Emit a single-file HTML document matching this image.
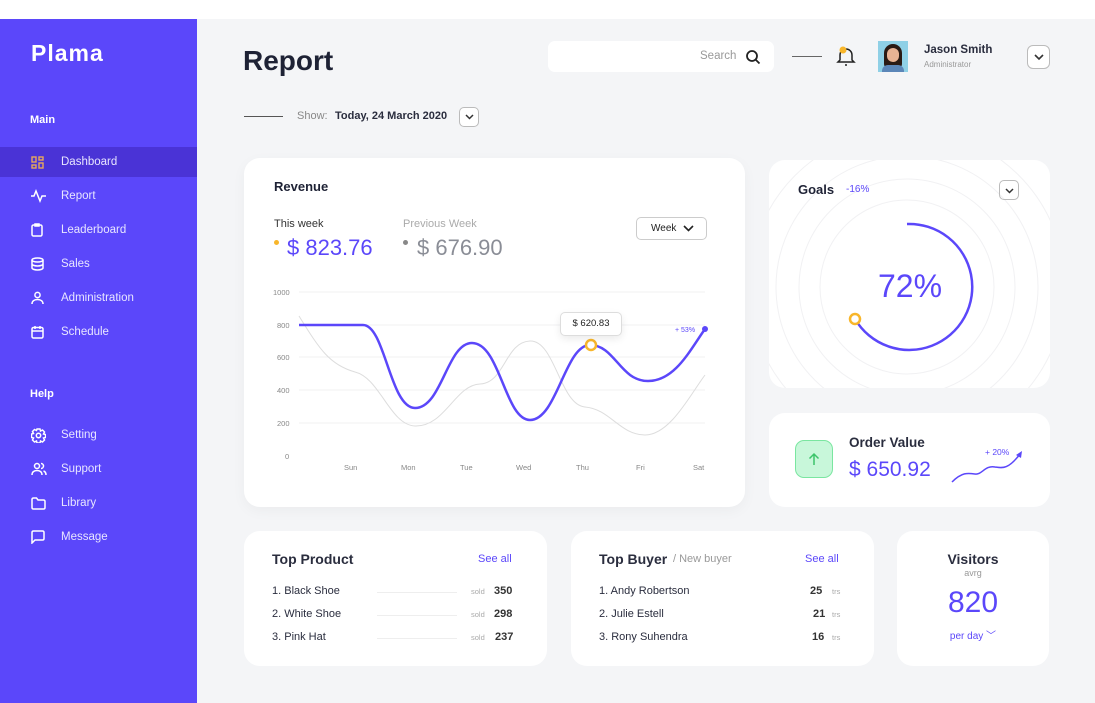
<!DOCTYPE html>
<html><head><meta charset="utf-8"><style>
*{margin:0;padding:0;box-sizing:border-box}
body{width:1095px;height:703px;background:#fff;font-family:"Liberation Sans",sans-serif;position:relative;overflow:hidden;color:#1e2235}
.main{position:absolute;left:0;top:19px;width:1095px;height:684px;background:#f4f5f7}
.side{position:absolute;left:0;top:19px;width:197px;height:684px;background:#5b47fa;color:#fff}
.a{position:absolute}
.card{position:absolute;background:#fff;border-radius:16px}
.nav{position:absolute;left:0;width:197px;height:30px;display:flex;align-items:center;font-size:11.5px;color:#e8e6ff}
.nav svg{position:absolute;left:31px}
.nav span{position:absolute;left:61px}
.sm{font-size:11px}
</style></head><body>
<div class="main"></div>
<div class="side">
<div class="a" style="left:31px;top:21px;font-size:23px;font-weight:bold;letter-spacing:1px">Plama</div>
<div class="a" style="left:30px;top:95px;font-size:11px;font-weight:bold">Main</div>
<div class="nav" style="top:128px;background:#4a33d6"><svg width="13" height="13" viewBox="0 0 13 13" fill="none" stroke="#e8a85c" stroke-width="1.4"><rect x="1" y="1" width="4" height="5"/><rect x="8" y="1" width="4" height="3"/><rect x="1" y="9" width="4" height="3"/><rect x="8" y="7" width="4" height="5"/></svg><span>Dashboard</span></div>
<div class="nav" style="top:162px"><svg width="15" height="14" viewBox="0 0 15 14" fill="none" stroke="#fff" stroke-width="1.5"><path d="M0 7h3l2-5 4 10 2-5h4"/></svg><span>Report</span></div>
<div class="nav" style="top:196px"><svg width="12" height="14" viewBox="0 0 12 14" fill="none" stroke="#fff" stroke-width="1.5"><rect x="1" y="2" width="10" height="11" rx="1.5"/><path d="M4 1h4v2H4z"/></svg><span>Leaderboard</span></div>
<div class="nav" style="top:230px"><svg width="13" height="14" viewBox="0 0 13 14" fill="none" stroke="#fff" stroke-width="1.5"><ellipse cx="6.5" cy="3" rx="5.5" ry="2"/><path d="M1 3v8c0 1 2.5 2 5.5 2s5.5-1 5.5-2V3M1 7c0 1 2.5 2 5.5 2S12 8 12 7"/></svg><span>Sales</span></div>
<div class="nav" style="top:264px"><svg width="13" height="14" viewBox="0 0 13 14" fill="none" stroke="#fff" stroke-width="1.5"><circle cx="6.5" cy="4" r="2.6"/><path d="M1 13c0-3 2.5-4.5 5.5-4.5S12 10 12 13"/></svg><span>Administration</span></div>
<div class="nav" style="top:298px"><svg width="13" height="14" viewBox="0 0 13 14" fill="none" stroke="#fff" stroke-width="1.5"><rect x="1" y="2.5" width="11" height="10.5" rx="1.5"/><path d="M1 6h11M4 1v3M9 1v3"/></svg><span>Schedule</span></div>
<div class="a" style="left:30px;top:369px;font-size:11px;font-weight:bold">Help</div>
<div class="nav" style="top:401px"><svg width="15" height="15" viewBox="0 0 15 15" fill="none" stroke="#fff" stroke-width="1.5"><circle cx="7.5" cy="7.5" r="2.2"/><path d="M6 1h3l.5 2 2-1 2 2-1 2 2 .5v3l-2 .5 1 2-2 2-2-1-.5 2H6l-.5-2-2 1-2-2 1-2-2-.5V6l2-.5-1-2 2-2 2 1z"/></svg><span>Setting</span></div>
<div class="nav" style="top:435px"><svg width="16" height="14" viewBox="0 0 16 14" fill="none" stroke="#fff" stroke-width="1.5"><circle cx="6" cy="4" r="2.5"/><path d="M1 13c0-3 2-4.5 5-4.5s5 1.5 5 4.5M10 1.5a2.5 2.5 0 010 5M12.5 9c1.5.5 2.5 2 2.5 4"/></svg><span>Support</span></div>
<div class="nav" style="top:469px"><svg width="15" height="13" viewBox="0 0 15 13" fill="none" stroke="#fff" stroke-width="1.5"><path d="M1 2.5c0-1 .5-1.5 1.5-1.5h3l1.5 2h5.5c1 0 1.5.5 1.5 1.5v6c0 1-.5 1.5-1.5 1.5h-10C1.5 12 1 11.5 1 10.5z"/></svg><span>Library</span></div>
<div class="nav" style="top:503px"><svg width="14" height="14" viewBox="0 0 14 14" fill="none" stroke="#fff" stroke-width="1.5"><path d="M1 2.5c0-1 .5-1.5 1.5-1.5h9c1 0 1.5.5 1.5 1.5v6c0 1-.5 1.5-1.5 1.5H4l-3 3z"/></svg><span>Message</span></div>
</div>

<div class="a" style="left:243px;top:45px;font-size:28px;font-weight:bold;color:#1e2235">Report</div>
<div class="a" style="left:244px;top:116px;width:39px;height:1px;background:#555"></div>
<div class="a" style="left:297px;top:110px;font-size:11px;color:#888">Show:</div>
<div class="a" style="left:335px;top:110px;font-size:11px;font-weight:bold;color:#2a2d3e">Today, 24 March 2020</div>
<div class="a" style="left:459px;top:107px;width:20px;height:20px;border:1px solid #bbb;border-radius:5px;background:#fff"><svg class="a" style="left:5px;top:6px" width="9" height="6" viewBox="0 0 9 6"><path d="M1 1l3.5 3.5L8 1" stroke="#333" stroke-width="1.5" fill="none"/></svg></div>

<div class="a" style="left:548px;top:41px;width:226px;height:31px;background:#fff;border-radius:7px"></div>
<div class="a" style="left:700px;top:50px;font-size:11.5px;color:#999">Search</div>
<svg class="a" style="left:745px;top:49px" width="16" height="16" viewBox="0 0 16 16" fill="none" stroke="#222" stroke-width="1.8"><circle cx="7" cy="7" r="5"/><path d="M11 11l3.5 3.5"/></svg>
<div class="a" style="left:792px;top:56px;width:30px;height:1px;background:#666"></div>
<svg class="a" style="left:836px;top:45px" width="20" height="22" viewBox="0 0 20 22" fill="none" stroke="#222" stroke-width="1.5"><path d="M4 15V10a6 6 0 0112 0v5l2 2H2z"/><path d="M9 20h2"/><circle cx="7" cy="5" r="3.5" fill="#f8b62b" stroke="none"/></svg>
<div class="a" style="left:878px;top:41px;width:30px;height:31px;background:#8fd0e6;overflow:hidden"><div class="a" style="left:6px;top:3px;width:18px;height:24px;border-radius:9px 9px 4px 4px;background:#2a1a14"></div><div class="a" style="left:9px;top:7px;width:12px;height:14px;border-radius:6px;background:#e8b394"></div><div class="a" style="left:4px;top:24px;width:22px;height:10px;border-radius:6px 6px 0 0;background:#5b86b8"></div></div>
<div class="a" style="left:924px;top:44px;font-size:11.5px;color:#2a2d3e;font-weight:bold">Jason Smith</div>
<div class="a" style="left:924px;top:60px;font-size:8px;color:#999">Administrator</div>
<div class="a" style="left:1027px;top:45px;width:23px;height:24px;border:1px solid #bbb;border-radius:6px;background:#fff"><svg class="a" style="left:6px;top:8px" width="10" height="7" viewBox="0 0 10 7"><path d="M1 1l4 4 4-4" stroke="#333" stroke-width="1.6" fill="none"/></svg></div>

<!-- Revenue -->
<div class="card" style="left:244px;top:158px;width:501px;height:349px;box-shadow:0 4px 14px rgba(0,0,0,.04)"></div>
<div class="a" style="left:274px;top:179px;font-size:13px;font-weight:bold">Revenue</div>
<div class="a" style="left:274px;top:218px;font-size:11px;color:#333">This week</div>
<div class="a" style="left:403px;top:218px;font-size:11px;color:#aaa">Previous Week</div>
<div class="a" style="left:274px;top:240px;width:5px;height:5px;border-radius:50%;background:#f8b62b"></div>
<div class="a" style="left:287px;top:235px;font-size:22px;color:#5b47fa">$ 823.76</div>
<div class="a" style="left:403px;top:240px;width:5px;height:5px;border-radius:50%;background:#888"></div>
<div class="a" style="left:417px;top:235px;font-size:22px;color:#8a8d96">$ 676.90</div>
<div class="a" style="left:636px;top:217px;width:71px;height:23px;border:1px solid #ccc;border-radius:5px;font-size:10px;color:#222;padding:5px 0 0 14px">Week<svg class="a" style="left:46px;top:7px" width="11" height="7" viewBox="0 0 11 7"><path d="M1 1l4.5 4.5L10 1" stroke="#222" stroke-width="1.6" fill="none"/></svg></div>
<svg class="a" style="left:0;top:0" width="1095" height="703">
<g stroke="#f0f0f2" stroke-width="1"><path d="M299 292H705M299 325H705M299 357H705M299 390H705M299 423H705"/></g>
<g font-size="7.5" fill="#888" font-family="Liberation Sans"><text x="273" y="295">1000</text><text x="277" y="328">800</text><text x="277" y="360">600</text><text x="277" y="393">400</text><text x="277" y="426">200</text><text x="285" y="459">0</text>
<text x="344" y="470">Sun</text><text x="401" y="470">Mon</text><text x="460" y="470">Tue</text><text x="516" y="470">Wed</text><text x="576" y="470">Thu</text><text x="636" y="470">Fri</text><text x="693" y="470">Sat</text></g>
<path d="M299 316C320 350 330 365 355 372C380 378 390 425 415 426C445 427 455 385 480 384C505 383 505 342 530 341C555 340 560 405 585 407C610 409 620 435 645 435C670 435 690 395 705 375" stroke="#ddd" stroke-width="1" fill="none"/>
<path d="M299 325H363C385 325 390 408 415 408C442 408 447 343 472 343C500 343 505 420 530 420C557 420 565 345 590 345C615 345 620 381 648 381C675 381 690 350 705 329" stroke="#5b47fa" stroke-width="2.5" fill="none"/>
<circle cx="705" cy="329" r="3" fill="#5b47fa"/>
<circle cx="591" cy="345" r="5" fill="#fff" stroke="#f8b62b" stroke-width="2.5"/>
<text x="675" y="332" font-size="7" fill="#5b47fa" font-family="Liberation Sans">+ 53%</text>
</svg>
<div class="a" style="left:560px;top:312px;width:62px;height:24px;background:#fff;border:1px solid #ddd;border-radius:5px;box-shadow:0 3px 8px rgba(0,0,0,.08);font-size:9.5px;color:#222;text-align:center;line-height:22px">$ 620.83</div>

<!-- Goals -->
<div class="card" style="left:769px;top:160px;width:281px;height:228px;overflow:hidden">
<svg class="a" style="left:0;top:0" width="281" height="228"><g fill="none" stroke="#f1f1f3"><circle cx="138" cy="127" r="87"/><circle cx="138" cy="127" r="108"/><circle cx="138" cy="127" r="131"/><circle cx="138" cy="127" r="158"/></g>
<path d="M138 64A63 63 0 1 1 86 159" fill="none" stroke="#5b47fa" stroke-width="2.5"/>
<circle cx="86" cy="159" r="5" fill="#fff" stroke="#f8b62b" stroke-width="2.5"/></svg>
<div class="a" style="left:29px;top:22px;font-size:13px;font-weight:bold">Goals</div>
<div class="a" style="left:77px;top:24px;font-size:10px;color:#5b47fa">-16%</div>
<div class="a" style="left:230px;top:20px;width:20px;height:20px;border:1px solid #bbb;border-radius:5px"><svg class="a" style="left:5px;top:7px" width="9" height="6" viewBox="0 0 9 6"><path d="M1 1l3.5 3.5L8 1" stroke="#333" stroke-width="1.5" fill="none"/></svg></div>
<div class="a" style="left:109px;top:108px;font-size:32px;color:#5b47fa">72%</div>
</div>

<!-- Order value -->
<div class="card" style="left:769px;top:413px;width:281px;height:94px"></div>
<div class="a" style="left:795px;top:440px;width:38px;height:38px;border-radius:9px;background:#c8f7da;border:1.5px solid #7ae6a0"><svg class="a" style="left:12px;top:11px" width="12" height="14" viewBox="0 0 12 14" fill="none" stroke="#3cc46a" stroke-width="1.5"><path d="M6 13V2M1.5 6.5L6 2l4.5 4.5"/></svg></div>
<div class="a" style="left:849px;top:435px;font-size:13.5px;font-weight:bold;color:#2a2d3e">Order Value</div>
<div class="a" style="left:849px;top:458px;font-size:21px;color:#5b47fa">$ 650.92</div>
<svg class="a" style="left:950px;top:445px" width="75" height="40" viewBox="0 0 75 40" fill="none"><path d="M2 37C12 27 18 28 25 29C32 30 35 20 45 22C52 23 58 25 70 9" stroke="#5b47fa" stroke-width="1.5"/><path d="M66 10l6-4-1 7z" fill="#5b47fa"/><text x="35" y="10" font-size="8.5" fill="#5b47fa" font-family="Liberation Sans">+ 20%</text></svg>

<!-- Top Product -->
<div class="card" style="left:244px;top:531px;width:303px;height:135px"></div>
<div class="a" style="left:272px;top:551px;font-size:14px;font-weight:bold;color:#2a2d3e">Top Product</div>
<div class="a" style="left:478px;top:553px;font-size:11px;color:#5b47fa">See all</div>
<div class="a sm" style="left:272px;top:585px;color:#2a2d3e">1. Black Shoe</div>
<div class="a sm" style="left:272px;top:608px;color:#2a2d3e">2. White Shoe</div>
<div class="a sm" style="left:272px;top:631px;color:#2a2d3e">3. Pink Hat</div>
<div class="a" style="left:377px;top:592px;width:80px;height:1px;background:#eee"></div>
<div class="a" style="left:377px;top:615px;width:80px;height:1px;background:#eee"></div>
<div class="a" style="left:377px;top:638px;width:80px;height:1px;background:#eee"></div>
<div class="a" style="left:471px;top:587px;font-size:7.5px;color:#aaa">sold</div><div class="a sm" style="left:494px;top:585px;font-weight:bold;color:#333">350</div>
<div class="a" style="left:471px;top:610px;font-size:7.5px;color:#aaa">sold</div><div class="a sm" style="left:494px;top:608px;font-weight:bold;color:#333">298</div>
<div class="a" style="left:471px;top:633px;font-size:7.5px;color:#aaa">sold</div><div class="a sm" style="left:495px;top:631px;font-weight:bold;color:#333">237</div>

<!-- Top Buyer -->
<div class="card" style="left:571px;top:531px;width:303px;height:135px"></div>
<div class="a" style="left:599px;top:551px;font-size:14px;font-weight:bold;color:#2a2d3e">Top Buyer</div>
<div class="a" style="left:673px;top:553px;font-size:11px;color:#999">/ New buyer</div>
<div class="a" style="left:805px;top:553px;font-size:11px;color:#5b47fa">See all</div>
<div class="a sm" style="left:599px;top:585px;color:#2a2d3e">1. Andy Robertson</div>
<div class="a sm" style="left:599px;top:608px;color:#2a2d3e">2. Julie Estell</div>
<div class="a sm" style="left:599px;top:631px;color:#2a2d3e">3. Rony Suhendra</div>
<div class="a sm" style="left:810px;top:585px;font-weight:bold;color:#333">25</div><div class="a" style="left:832px;top:587px;font-size:7.5px;color:#aaa">trs</div>
<div class="a sm" style="left:813px;top:608px;font-weight:bold;color:#333">21</div><div class="a" style="left:832px;top:610px;font-size:7.5px;color:#aaa">trs</div>
<div class="a sm" style="left:812px;top:631px;font-weight:bold;color:#333">16</div><div class="a" style="left:832px;top:633px;font-size:7.5px;color:#aaa">trs</div>

<!-- Visitors -->
<div class="card" style="left:897px;top:531px;width:152px;height:135px"></div>
<div class="a" style="left:897px;top:551px;width:152px;text-align:center;font-size:14px;font-weight:bold;color:#2a2d3e">Visitors</div>
<div class="a" style="left:897px;top:568px;width:152px;text-align:center;font-size:9px;color:#999">avrg</div>
<div class="a" style="left:897px;top:586px;width:152px;text-align:center;font-size:30px;color:#5b47fa">820</div>
<div class="a" style="left:897px;top:627px;width:152px;text-align:center;font-size:10px;color:#5b47fa">per day ﹀</div>
</body></html>
